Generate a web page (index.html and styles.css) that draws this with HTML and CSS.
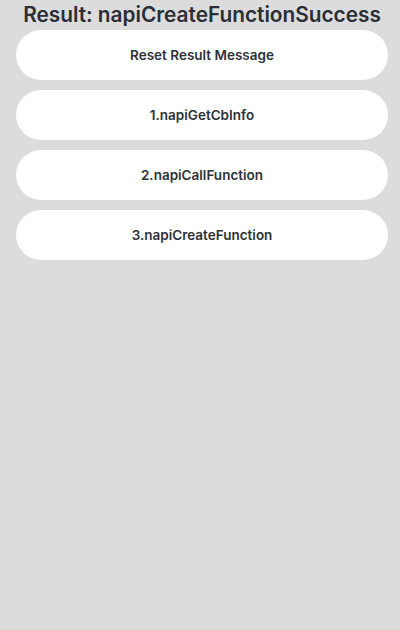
FILE: index.html
```html
<!DOCTYPE html>
<html>
<head>
<meta charset="utf-8">
<link rel="stylesheet" href="styles.css">
</head>
<body>
<div class="page">
  <h1 class="title">Result: napiCreateFunctionSuccess</h1>
  <div class="buttons">
    <button class="btn">Reset Result Message</button>
    <button class="btn">1.napiGetCbInfo</button>
    <button class="btn">2.napiCallFunction</button>
    <button class="btn">3.napiCreateFunction</button>
  </div>
</div>
</body>
</html>
```
FILE: styles.css
```css
html, body {
  margin: 0;
  padding: 0;
  background: #dcdcdc;
}
.page {
  width: 400px;
  height: 630px;
  display: flex;
  flex-direction: column;
  align-items: center;
  font-family: Inter, "Noto Sans", sans-serif;
  padding-left: 4px;
  box-sizing: border-box;
}
.title {
  margin: 0;
  height: 30px;
  line-height: 30px;
  font-size: 20.8px;
  font-weight: 600;
  color: #2a2e36;
  white-space: nowrap;
}
.buttons {
  display: flex;
  flex-direction: column;
  gap: 10px;
}
.btn {
  width: 372px;
  height: 50px;
  border: none;
  border-radius: 25px;
  background: #ffffff;
  font-family: Inter, "Noto Sans", sans-serif;
  font-size: 13.5px;
  font-weight: 600;
  color: #2e3138;
  padding: 0;
}
```
